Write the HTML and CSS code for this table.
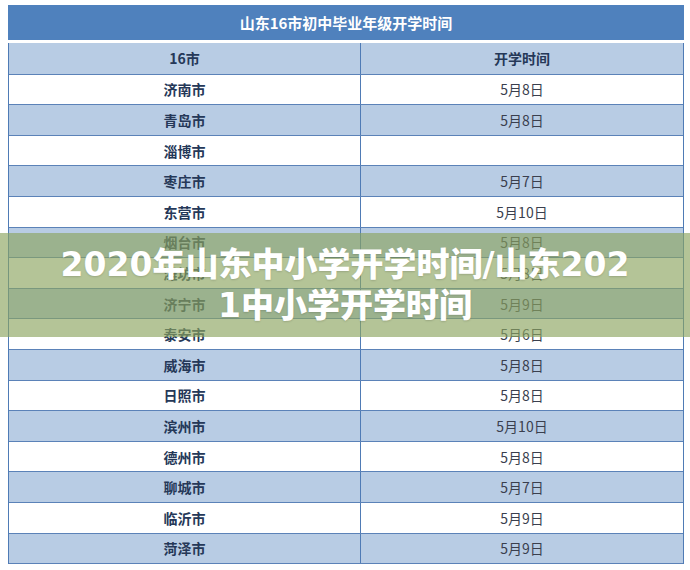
FILE: index.html
```html
<!DOCTYPE html>
<html lang="zh-CN">
<head>
<meta charset="utf-8">
<title>2020年山东中小学开学时间</title>
<link rel="stylesheet" href="styles.css">
</head>
<body>
<div class="page">
  <div class="caption">山东16市初中毕业年级开学时间</div>
  <div class="table">
    <div class="row head"><div class="cell city">16市</div><div class="cell date">开学时间</div></div>
    <div class="row"><div class="cell city">济南市</div><div class="cell">5月8日</div></div>
    <div class="row alt"><div class="cell city">青岛市</div><div class="cell">5月8日</div></div>
    <div class="row"><div class="cell city">淄博市</div><div class="cell"></div></div>
    <div class="row alt"><div class="cell city">枣庄市</div><div class="cell">5月7日</div></div>
    <div class="row"><div class="cell city">东营市</div><div class="cell">5月10日</div></div>
    <div class="row alt"><div class="cell city">烟台市</div><div class="cell">5月8日</div></div>
    <div class="row"><div class="cell city">潍坊市</div><div class="cell">5月8日</div></div>
    <div class="row alt"><div class="cell city">济宁市</div><div class="cell">5月9日</div></div>
    <div class="row"><div class="cell city">泰安市</div><div class="cell">5月6日</div></div>
    <div class="row alt"><div class="cell city">威海市</div><div class="cell">5月8日</div></div>
    <div class="row"><div class="cell city">日照市</div><div class="cell">5月8日</div></div>
    <div class="row alt"><div class="cell city">滨州市</div><div class="cell">5月10日</div></div>
    <div class="row"><div class="cell city">德州市</div><div class="cell">5月8日</div></div>
    <div class="row alt"><div class="cell city">聊城市</div><div class="cell">5月7日</div></div>
    <div class="row"><div class="cell city">临沂市</div><div class="cell">5月9日</div></div>
    <div class="row alt"><div class="cell city">菏泽市</div><div class="cell">5月9日</div></div>
  </div>
  <div class="banner"><h1 class="banner-title">2020年山东中小学开学时间/山东2021中小学开学时间</h1></div>
</div>
</body>
</html>
```
FILE: styles.css
```css
html, body {
  margin: 0;
  padding: 0;
  background: #ffffff;
}
.page {
  position: relative;
  width: 690px;
  height: 570px;
  padding: 5px 0 0 8px;
  box-sizing: border-box;
  font-family: "Noto Sans CJK SC", sans-serif;
}
.caption {
  width: 676px;
  height: 35px;
  background: #4f81bd;
  color: #ffffff;
  font-size: 15px;
  font-weight: 700;
  line-height: 35px;
  text-align: center;
}
.table {
  margin-top: 3px;
  width: 676px;
  box-sizing: border-box;
  border-left: 1px solid #4f7bb5;
  border-right: 1px solid #4f7bb5;
}
.row {
  display: grid;
  grid-template-columns: 352px 1fr;
  height: 30.6px;
  box-sizing: border-box;
  border-bottom: 1px solid #5b82b8;
  background: #ffffff;
}
.row.head {
  height: 31.6px;
}
.row.alt, .row.head {
  background: #b8cce4;
}
.cell {
  display: flex;
  align-items: center;
  justify-content: center;
  font-size: 14px;
  color: #3a3f4e;
}
.cell.city {
  border-right: 1px solid #4f7bb5;
  font-weight: 700;
  color: #253858;
}
.row.head .cell {
  font-weight: 700;
  color: #253858;
}
.banner {
  position: absolute;
  left: 0;
  right: 0;
  top: 233px;
  height: 104px;
  background: rgba(140, 165, 95, 0.65);
  display: flex;
  align-items: center;
  justify-content: center;
}
.banner-title {
  margin: 0;
  width: 580px;
  font-family: "DejaVu Sans", "Noto Sans CJK SC", sans-serif;
  font-size: 33px;
  line-height: 41px;
  font-weight: 900;
  color: #ffffff;
  text-align: center;
  word-break: break-all;
  text-shadow: 0 1px 2px rgba(0, 0, 0, 0.15);
}
```
